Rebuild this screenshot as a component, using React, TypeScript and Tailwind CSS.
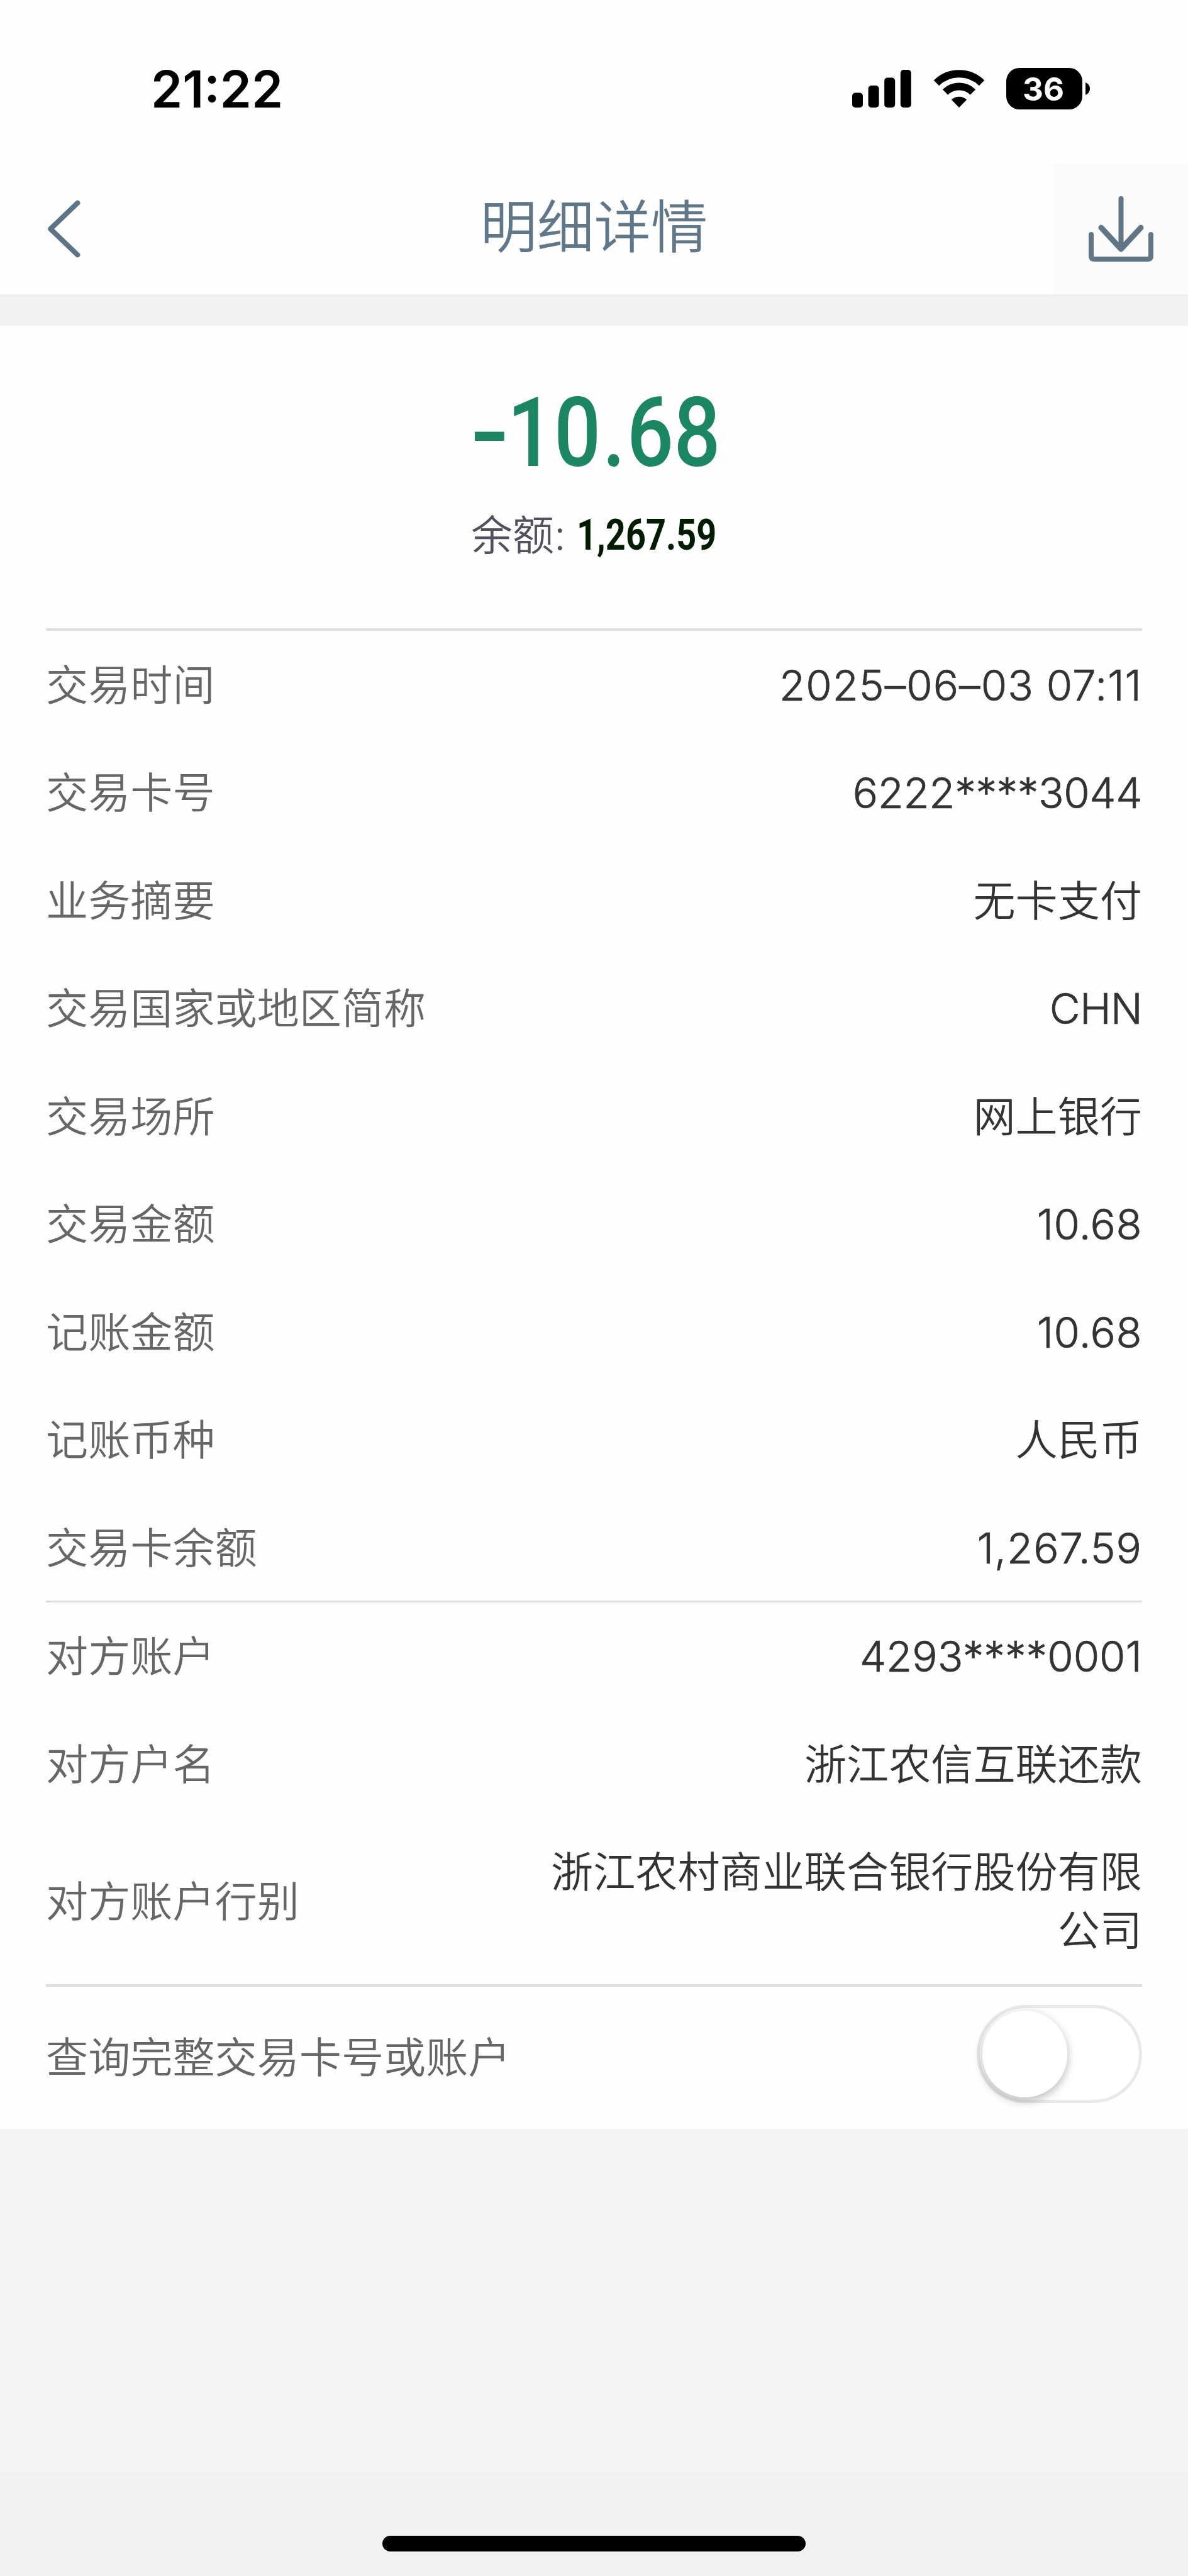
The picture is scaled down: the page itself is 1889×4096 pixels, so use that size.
import { ReactNode } from 'react';

interface DetailItem {
  label: string;
  value: string;
  className?: string;
}

const TRANSACTION: DetailItem[] = [
  {
    label: '交易时间',
    value: '2025–06–03 07:11',
    className: 'tracking-[1px] [-webkit-text-stroke:0.7px_#333]',
  },
  {
    label: '交易卡号',
    value: '6222****3044',
    className: 'tracking-[-0.4px] [-webkit-text-stroke:0.7px_#333]',
  },
  { label: '业务摘要', value: '无卡支付' },
  {
    label: '交易国家或地区简称',
    value: 'CHN',
    className: 'tracking-[-0.8px] [-webkit-text-stroke:0.7px_#333]',
  },
  { label: '交易场所', value: '网上银行' },
  {
    label: '交易金额',
    value: '10.68',
    className: 'tracking-[0.5px] [-webkit-text-stroke:0.7px_#333]',
  },
  {
    label: '记账金额',
    value: '10.68',
    className: 'tracking-[0.5px] [-webkit-text-stroke:0.7px_#333]',
  },
  { label: '记账币种', value: '人民币' },
  {
    label: '交易卡余额',
    value: '1,267.59',
    className: 'tracking-[1px] [-webkit-text-stroke:0.7px_#333]',
  },
];

const COUNTERPARTY: DetailItem[] = [
  {
    label: '对方账户',
    value: '4293****0001',
    className: '[-webkit-text-stroke:0.7px_#333]',
  },
  { label: '对方户名', value: '浙江农信互联还款' },
  { label: '对方账户行别', value: '浙江农村商业联合银行股份有限公司' },
];

const SignalIcon = () => (
  <svg className="h-[60px] w-[94px]" viewBox="0 0 94 60" fill="#000">
    <rect x="0" y="36.5" width="17" height="23.5" rx="5" />
    <rect x="25.6" y="25" width="17" height="35" rx="5" />
    <rect x="51.2" y="12.6" width="17" height="47.4" rx="5" />
    <rect x="76.8" y="0" width="17" height="60" rx="5" />
  </svg>
);

const WifiIcon = () => (
  <svg className="h-[60px] w-[82px]" viewBox="0 0 82 60" fill="none" stroke="#000">
    <path d="M5 21 A51.5 51.5 0 0 1 77 21" strokeWidth="12" />
    <path d="M19 35.5 A31.5 31.5 0 0 1 63 35.5" strokeWidth="12" />
    <path d="M41 60 L28.8 47.6 A17.5 17.5 0 0 1 53.2 47.6 Z" fill="#000" stroke="none" />
  </svg>
);

const BatteryIcon = () => (
  <div className="flex items-center gap-[5px]">
    <div className="flex h-[66px] w-[121px] items-center justify-center rounded-[21px] bg-black">
      <span className="mr-[3px] text-[51px] leading-none font-bold text-white">36</span>
    </div>
    <svg className="h-5 w-[7px]" viewBox="0 0 7 20">
      <path d="M0 0 Q7 3 7 10 Q7 17 0 20 Z" fill="#000" />
    </svg>
  </div>
);

const StatusBar = () => (
  <div className="flex h-[259px] items-start justify-between pr-[156px] pl-[240px]">
    <span className="mt-[100px] text-[80.5px] leading-[84px] font-semibold text-black">21:22</span>
    <div className="mt-[108px] flex items-center">
      <SignalIcon />
      <div className="ml-[35px]">
        <WifiIcon />
      </div>
      <div className="ml-[34px]">
        <BatteryIcon />
      </div>
    </div>
  </div>
);

const Header = () => (
  <div className="flex h-[209px] items-stretch">
    <button className="flex w-[214px] items-center pl-[72px]">
      <svg
        className="h-[94px] w-[60px]"
        viewBox="0 0 60 94"
        fill="none"
        stroke="#5d7487"
        strokeWidth="8"
        strokeLinecap="round"
        strokeLinejoin="round"
      >
        <path d="M51.4 5.7 L8.3 47 L51.4 88.3" />
      </svg>
    </button>
    <h1 className="flex flex-1 items-center justify-center pb-1 text-[90.5px] font-[350] text-[#607689]">
      明细详情
    </h1>
    <button className="flex w-[214px] items-start bg-[#fbfbfb] pt-[51px] pl-[54px]">
      <svg
        className="h-[108px] w-[106px]"
        viewBox="0 0 106 108"
        fill="none"
        stroke="#607585"
        strokeWidth="8"
        strokeLinecap="round"
      >
        <path d="M53.5 6 V84" />
        <path d="M22 52 L53.5 86 L85 52" strokeWidth="9" strokeLinejoin="round" />
        <path d="M6 63 V97 Q6 102 11 102 H96 Q101 102 101 97 V63" />
      </svg>
    </button>
  </div>
);

const Amount = () => (
  <div className="flex h-[481px] flex-col items-center pt-[93px]">
    <div className="ml-[7px] flex scale-x-[0.847] font-['Roboto'] text-[154.5px] leading-[156px] font-medium text-[#1b8660]">
      <span className="w-[66px] scale-x-[1.38] text-center">-</span>
      <span>10</span>
      <span className="w-[49px] text-center">.</span>
      <span>68</span>
    </div>
    <div className="mt-[44px] flex w-[391px] justify-between whitespace-nowrap leading-[80px]">
      <span className="text-[66px] font-[350] text-[#50505f]">余额:</span>
      <div className="w-[223px]">
        <span className="inline-block origin-left scale-x-[0.81] font-['Roboto'] text-[69px] font-bold text-[#001c00]">
          1,267.59
        </span>
      </div>
    </div>
  </div>
);

const Row = ({ label, children }: { label: string; children: ReactNode }) => (
  <div className="flex items-center justify-between pt-[40px] pb-[38px]">
    <span className="text-[#666]">{label}</span>
    <span className="max-w-[945px] text-right text-[#333]">{children}</span>
  </div>
);

const Section = ({ items }: { items: DetailItem[] }) => (
  <>
    {items.map((item) => (
      <Row key={item.label} label={item.label}>
        <span className={item.className}>{item.value}</span>
      </Row>
    ))}
  </>
);

const Toggle = () => (
  <div className="flex h-[156px] w-[263px] items-center rounded-full border-[5px] border-[#e9e9e9] bg-white pl-[4px]">
    <div className="h-[138px] w-[135px] rounded-full bg-white shadow-[0_5px_14px_1px_rgba(0,0,0,0.25)]" />
  </div>
);

export default function App() {
  return (
    <div className="flex h-[4096px] w-[1889px] flex-col overflow-hidden bg-[#fefefe] font-['Inter','Noto_Sans_CJK_SC',sans-serif]">
      <StatusBar />
      <Header />
      <div className="h-[50px] border-t-[3px] border-[#ededed] bg-[#f1f1f1]" />

      <Amount />

      <div className="mx-[73px] text-[67.15px] leading-[93.45px] font-[350]">
        <div className="h-[4px] bg-[#dedede]" />
        <Section items={TRANSACTION} />
        <div className="-my-px h-[3px] bg-[#dedede]" />
        <Section items={COUNTERPARTY} />
        <div className="h-[4px] bg-[#dedede]" />
        <div className="flex h-[226px] items-start justify-between">
          <span className="mt-[66px] text-[#666]">查询完整交易卡号或账户</span>
          <div className="mt-[29px]">
            <Toggle />
          </div>
        </div>
      </div>

      <div className="flex-1 bg-[#f4f4f4]" />
      <div className="flex h-[165px] shrink-0 justify-center bg-[#f1f1f1] pt-[101px]">
        <div className="h-[25px] w-[673px] rounded-full bg-black" />
      </div>
    </div>
  );
}
